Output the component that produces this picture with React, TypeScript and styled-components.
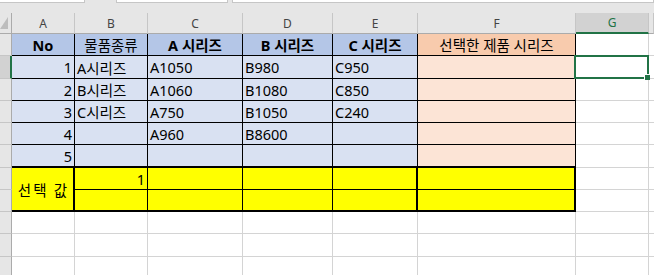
import styled, { createGlobalStyle } from 'styled-components';

const GREEN = '#217346';
const GRID = '#d4d4d4';
const HEAD_BG = '#e6e6e6';
const HEAD_SEL = '#d2d2d2';
const BLUE_HEAD = '#b4c6e7';
const BLUE = '#d9e1f2';
const PEACH_HEAD = '#f8cbad';
const PEACH = '#fce4d6';
const YELLOW = '#ffff00';

const COLS = [12, 63, 73, 95, 90, 85, 158, 73, 5];
const ROWS = [22, 23, 22, 22, 22, 23, 22, 22, 22, 23, 22];
const LETTERS = ['A', 'B', 'C', 'D', 'E', 'F', 'G'];

const GlobalStyle = createGlobalStyle`
  html, body {
    margin: 0;
    padding: 0;
    background: #ffffff;
  }
  body {
    font-family: "Noto Sans", "Noto Sans CJK KR", sans-serif;
    color: #000;
  }
`;

const Screen = styled.div`
  width: 654px;
  height: 275px;
  overflow: hidden;
  background: ${HEAD_BG};
  display: flex;
  flex-direction: column;
`;

const TopBar = styled.div`
  display: flex;
  height: 13px;
  flex-shrink: 0;
`;

const FieldBox = styled.div<{ $width?: number; $offset: number }>`
  height: 2px;
  margin-left: ${(p) => p.$offset}px;
  width: ${(p) => (p.$width ? `${p.$width}px` : 'auto')};
  flex: ${(p) => (p.$width ? '0 0 auto' : '1')};
  background: #fff;
  border: 1px solid #c6c6c6;
  border-top: none;
`;

const Sheet = styled.div`
  display: grid;
  grid-template-columns: ${COLS.map((c) => `${c}px`).join(' ')};
  grid-template-rows: 21px ${ROWS.map((r) => `${r}px`).join(' ')};
  background: #fff;
`;

const Corner = styled.div`
  background: ${HEAD_BG};
  border-right: 1px solid #ababab;
  border-bottom: 1px solid #ababab;
  display: flex;
  align-items: flex-end;
  padding: 0 0 3px 0;
  box-sizing: border-box;
`;

const ColHead = styled.div<{ $selected?: boolean }>`
  box-sizing: border-box;
  display: flex;
  align-items: center;
  justify-content: center;
  font-size: 12px;
  color: ${(p) => (p.$selected ? GREEN : '#444')};
  background: ${(p) => (p.$selected ? HEAD_SEL : HEAD_BG)};
  border-right: 1px solid #c6c6c6;
  border-bottom: ${(p) => (p.$selected ? `2px solid ${GREEN}` : '1px solid #ababab')};
`;

const RowHead = styled.div<{ $selected?: boolean }>`
  box-sizing: border-box;
  background: ${(p) => (p.$selected ? HEAD_SEL : HEAD_BG)};
  border-right: ${(p) => (p.$selected ? `2px solid ${GREEN}` : '1px solid #ababab')};
  border-bottom: 1px solid #c6c6c6;
`;

type CellProps = {
  $bg?: string;
  $align?: 'left' | 'center' | 'right';
  $bold?: boolean;
  $line?: string;
  $right?: number;
  $bottom?: number;
  $span?: number;
};

const Cell = styled.div<CellProps>`
  box-sizing: border-box;
  position: relative;
  display: flex;
  align-items: center;
  justify-content: ${(p) =>
    p.$align === 'right' ? 'flex-end' : p.$align === 'center' ? 'center' : 'flex-start'};
  padding: 0 2px;
  font-size: 14.5px;
  font-weight: ${(p) => (p.$bold ? 700 : 400)};
  white-space: nowrap;
  overflow: visible;
  background: ${(p) => p.$bg ?? '#fff'};
  border-right: ${(p) => p.$right ?? 1}px solid ${(p) => p.$line ?? '#000'};
  border-bottom: ${(p) => p.$bottom ?? 1}px solid ${(p) => p.$line ?? '#000'};
  grid-row: ${(p) => (p.$span ? `span ${p.$span}` : 'auto')};
`;

const LabelText = styled.span`
  font-family: "Noto Sans CJK KR", sans-serif;
  font-size: 14.5px;
  letter-spacing: 2px;
  padding-left: 2px;
`;

const Selection = styled.div`
  position: absolute;
  top: -1px;
  left: -2px;
  right: -1px;
  bottom: -1px;
  border: 2px solid ${GREEN};
  z-index: 2;
  pointer-events: none;
`;

const Handle = styled.div`
  position: absolute;
  right: -3px;
  bottom: -3px;
  width: 5px;
  height: 5px;
  background: ${GREEN};
  border: 1px solid #fff;
  border-right: none;
  border-bottom: none;
`;

const CornerMark = () => (
  <svg width="9" height="13" viewBox="0 0 9 13">
    <polygon points="8,0 8,12 0,12" fill="#bdbdbd" />
  </svg>
);

const dataRows = [
  ['1', 'A시리즈', 'A1050', 'B980', 'C950'],
  ['2', 'B시리즈', 'A1060', 'B1080', 'C850'],
  ['3', 'C시리즈', 'A750', 'B1050', 'C240'],
  ['4', '', 'A960', 'B8600', ''],
  ['5', '', '', '', ''],
];

const GridTail = ({ selected }: { selected?: boolean }) => (
  <>
    <Cell $line={GRID}>{selected && <Selection><Handle /></Selection>}</Cell>
    <Cell $line={GRID} $right={0} />
  </>
);

export default function App() {
  return (
    <>
      <GlobalStyle />
      <Screen>
        <TopBar>
          <FieldBox $width={84} $offset={-1} />
          <FieldBox $width={110} $offset={31} />
          <FieldBox $offset={4} />
        </TopBar>
        <Sheet>
          <Corner>
            <CornerMark />
          </Corner>
          {LETTERS.map((l) => (
            <ColHead key={l} $selected={l === 'G'}>
              {l}
            </ColHead>
          ))}
          <ColHead />

          {/* header row */}
          <RowHead />
          <Cell $bg={BLUE_HEAD} $align="center" $bold>No</Cell>
          <Cell $bg={BLUE_HEAD} $align="center">물품종류</Cell>
          <Cell $bg={BLUE_HEAD} $align="center" $bold>A 시리즈</Cell>
          <Cell $bg={BLUE_HEAD} $align="center" $bold>B 시리즈</Cell>
          <Cell $bg={BLUE_HEAD} $align="center" $bold>C 시리즈</Cell>
          <Cell $bg={PEACH_HEAD} $align="center">선택한 제품 시리즈</Cell>
          <GridTail />

          {dataRows.map((row, i) => {
            const last = i === dataRows.length - 1;
            const b = last ? 2 : 1;
            return [
              <RowHead key={`h${i}`} $selected={i === 0} />,
              <Cell key={`a${i}`} $bg={BLUE} $align="right" $bottom={b}>{row[0]}</Cell>,
              <Cell key={`b${i}`} $bg={BLUE} $bottom={b}>{row[1]}</Cell>,
              <Cell key={`c${i}`} $bg={BLUE} $bottom={b}>{row[2]}</Cell>,
              <Cell key={`d${i}`} $bg={BLUE} $bottom={b}>{row[3]}</Cell>,
              <Cell key={`e${i}`} $bg={BLUE} $bottom={b}>{row[4]}</Cell>,
              <Cell key={`f${i}`} $bg={PEACH} $bottom={b} />,
              <GridTail key={`g${i}`} selected={i === 0} />,
            ];
          })}

          {/* yellow block */}
          <RowHead />
          <Cell $bg={YELLOW} $align="center" $span={2} $right={2} $bottom={2}>
            <LabelText>선택 값</LabelText>
          </Cell>
          <Cell $bg={YELLOW} $align="right">1</Cell>
          <Cell $bg={YELLOW} />
          <Cell $bg={YELLOW} />
          <Cell $bg={YELLOW} $right={2} />
          <Cell $bg={YELLOW} $right={2} />
          <GridTail />

          <RowHead />
          <Cell $bg={YELLOW} $bottom={2} />
          <Cell $bg={YELLOW} $bottom={2} />
          <Cell $bg={YELLOW} $bottom={2} />
          <Cell $bg={YELLOW} $right={2} $bottom={2} />
          <Cell $bg={YELLOW} $right={2} $bottom={2} />
          <GridTail />

          {[0, 1, 2].map((r) =>
            [
              <RowHead key={`rh${r}`} />,
              ...[0, 1, 2, 3, 4, 5].map((c) => <Cell key={`w${r}-${c}`} $line={GRID} />),
              <GridTail key={`wt${r}`} />,
            ]
          )}
        </Sheet>
      </Screen>
    </>
  );
}
